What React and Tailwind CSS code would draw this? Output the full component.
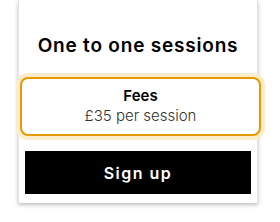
export default function App() {
  return (
    <div className="w-[280px] h-[222px] bg-white" style={{ fontFamily: "Inter, 'Open Sans', sans-serif" }}>
      <div className="ml-[18px] w-[240px] h-[203px] bg-white border-l border-r border-[#e3e3e3] shadow-[0_2px_4px_rgba(0,0,0,0.25)] flex flex-col">
        <h2 className="pt-[35px] text-center text-[19px] leading-[22px] font-semibold tracking-[0.8px] text-black">
          One to one sessions
        </h2>
        <div className="mt-[20px] ml-[1px] w-[241px] h-[59px] rounded-[8px] border-[2.5px] border-[#e69a00] ring-4 ring-[#fbeccc] bg-white flex flex-col items-center justify-center">
          <div className="text-[15px] leading-[18px] font-semibold text-black">Fees</div>
          <div className="text-[15px] leading-[21px] font-light text-[#333]">£35 per session</div>
        </div>
        <button className="mt-[15px] mx-auto w-[226px] h-[43px] bg-black text-white text-[16px] font-semibold tracking-[1.5px]">
          Sign up
        </button>
      </div>
    </div>
  );
}
